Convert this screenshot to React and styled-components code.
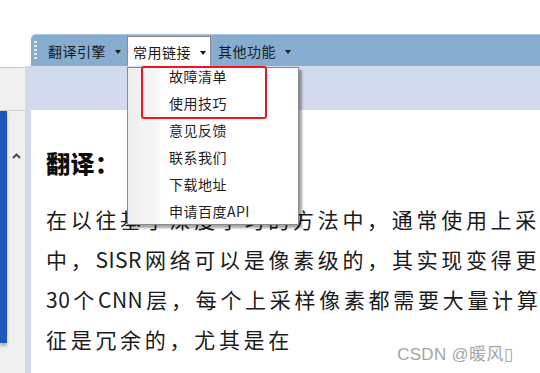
import React from "react"
import styled, { createGlobalStyle } from "styled-components"

const GlobalStyle = createGlobalStyle`
  html, body {
    margin: 0;
    padding: 0;
    background: #ffffff;
    overflow: hidden;
  }
  body {
    font-family: "Noto Sans CJK SC", "Liberation Sans", sans-serif;
  }
`

const Frame = styled.div`
  position: relative;
  display: flex;
  width: 540px;
  height: 373px;
  overflow: hidden;
  background: #ffffff;
`

/* left scroll panel */
const SidePanel = styled.div`
  width: 25px;
  display: flex;
  flex-direction: column;
  flex-shrink: 0;
`

const SideTop = styled.div`
  height: 67px;
  background: #ffffff;
  border-bottom: 1px solid #c8c8c8;
`

const SideGray = styled.div`
  height: 42px;
  background: #f0f0f0;
  border-bottom: 1px solid #d0d0d0;
`

const SideScroll = styled.div`
  flex: 1;
  display: flex;
  background: #f0f0f0;
`

const BlueStripe = styled.div`
  width: 7px;
  height: 232px;
  background: #1c57b9;
  box-shadow: 0 3px 3px rgba(0, 0, 0, 0.25);
`

const ScrollArrow = styled.div`
  flex: 1;
  display: flex;
  justify-content: center;
  padding-top: 42px;
  svg {
    display: block;
  }
`

/* main area */
const Main = styled.div`
  flex: 1;
  display: flex;
  flex-direction: column;
`

const TopBlank = styled.div`
  height: 34px;
  background: #ffffff;
`

const ToolbarRow = styled.div`
  display: flex;
  background: #ffffff;
  padding-left: 6px;
`

const Toolbar = styled.div`
  position: relative;
  flex: 1;
  height: 32px;
  display: flex;
  align-items: stretch;
  background: #86acd0;
  border-top: 1px solid #a9c4de;
  border-top-left-radius: 5px;
  box-sizing: border-box;
  padding-left: 3px;
`

const Grip = styled.div`
  width: 3px;
  margin: 5px 5px 0 0;
  height: 20px;
  background: radial-gradient(circle, #e8eef6 45%, transparent 55%) 0 0 / 3px 4px repeat-y;
`

const MenuButton = styled.div`
  position: relative;
  display: flex;
  align-items: center;
  gap: 9px;
  padding: 0 4px 0 5px;
  margin-right: 1px;
  font-size: 14px;
  letter-spacing: 0.5px;
  color: #1a1a1a;
  box-sizing: border-box;
  border: 1px solid ${p => (p.$open ? "#8a8a8a" : "transparent")};
  border-bottom: none;
  background: ${p => (p.$open ? "#ffffff" : "transparent")};
  margin-top: ${p => (p.$open ? "1px" : "0")};
  z-index: 3;
`

const Caret = styled.span`
  width: 0;
  height: 0;
  border-left: 3px solid transparent;
  border-right: 3px solid transparent;
  border-top: 4px solid #1a1a1a;
  margin-top: 2px;
`

const Dropdown = styled.div`
  position: absolute;
  top: 30px;
  left: -1px;
  width: 172px;
  height: 158px;
  background: linear-gradient(to right, #eeeeee 0, #f7f7f7 30px, #ffffff 34px);
  border: 1px solid #8a8a8a;
  box-sizing: border-box;
  box-shadow: 3px 3px 2px rgba(0, 0, 0, 0.35);
  z-index: 4;
`

const DropItem = styled.div`
  height: 27px;
  line-height: 17px;
  padding-left: 41px;
  font-size: 14px;
  letter-spacing: 0.5px;
  color: #1e1e1e;
  white-space: nowrap;
`

const Highlight = styled.div`
  position: absolute;
  left: 13px;
  top: -2px;
  width: 126px;
  height: 53px;
  border: 2px solid #f0141e;
  border-radius: 3px;
  box-sizing: border-box;
`

const Body = styled.div`
  flex: 1;
  display: flex;
  flex-direction: column;
  background: #d4daee;
`

const Band = styled.div`
  height: 44px;
`

const Content = styled.div`
  flex: 1;
  margin-left: 6px;
  background: #ffffff;
  padding: 38px 0 0 15px;
  color: #1a1a1a;
`

const Heading = styled.div`
  font-size: 24px;
  font-weight: 900;
  line-height: 30px;
  letter-spacing: 0.5px;
  margin-bottom: 21px;
  color: #0c0c0c;
`

const Line = styled.div`
  font-size: 21px;
  line-height: 40px;
  letter-spacing: 3.7px;
  white-space: nowrap;
`

const Latin = styled.span`
  letter-spacing: 0.5px;
  margin-right: 3px;
`

const Watermark = styled.div`
  position: absolute;
  right: 27px;
  bottom: 8px;
  font-size: 17px;
  color: #a4a4a4;
  letter-spacing: 0.3px;
  font-family: "Liberation Sans", "Noto Sans CJK SC", sans-serif;
`

const menuItems = ["故障清单", "使用技巧", "意见反馈", "联系我们", "下载地址", "申请百度API"]

const App = () => {
  return (
    <>
      <GlobalStyle />
      <Frame>
        <SidePanel>
          <SideTop />
          <SideGray />
          <SideScroll>
            <BlueStripe />
            <ScrollArrow>
              <svg width="9" height="6" viewBox="0 0 9 6">
                <path d="M1 5 L4.5 1.5 L8 5" fill="none" stroke="#444" strokeWidth="1.8" />
              </svg>
            </ScrollArrow>
          </SideScroll>
        </SidePanel>

        <Main>
          <TopBlank />
          <ToolbarRow>
            <Toolbar>
              <Grip />
              <MenuButton>
                翻译引擎 <Caret />
              </MenuButton>
              <MenuButton $open>
                常用链接 <Caret />
                <Dropdown>
                  {menuItems.map((item, i) => (
                    <DropItem key={i}>{item}</DropItem>
                  ))}
                  <Highlight />
                </Dropdown>
              </MenuButton>
              <MenuButton>
                其他功能 <Caret />
              </MenuButton>
            </Toolbar>
          </ToolbarRow>
          <Body>
            <Band />
            <Content>
              <Heading>翻译：</Heading>
              <Line>在以往基于深度学习的方法中，通常使用上采样</Line>
              <Line>中，<Latin>SISR</Latin>网络可以是像素级的，其实现变得更</Line>
              <Line><Latin>30</Latin>个<Latin>CNN</Latin>层，每个上采样像素都需要大量计算</Line>
              <Line>征是冗余的，尤其是在</Line>
            </Content>
          </Body>
        </Main>
        <Watermark>CSDN @暖风▯</Watermark>
      </Frame>
    </>
  )
}

export default App
